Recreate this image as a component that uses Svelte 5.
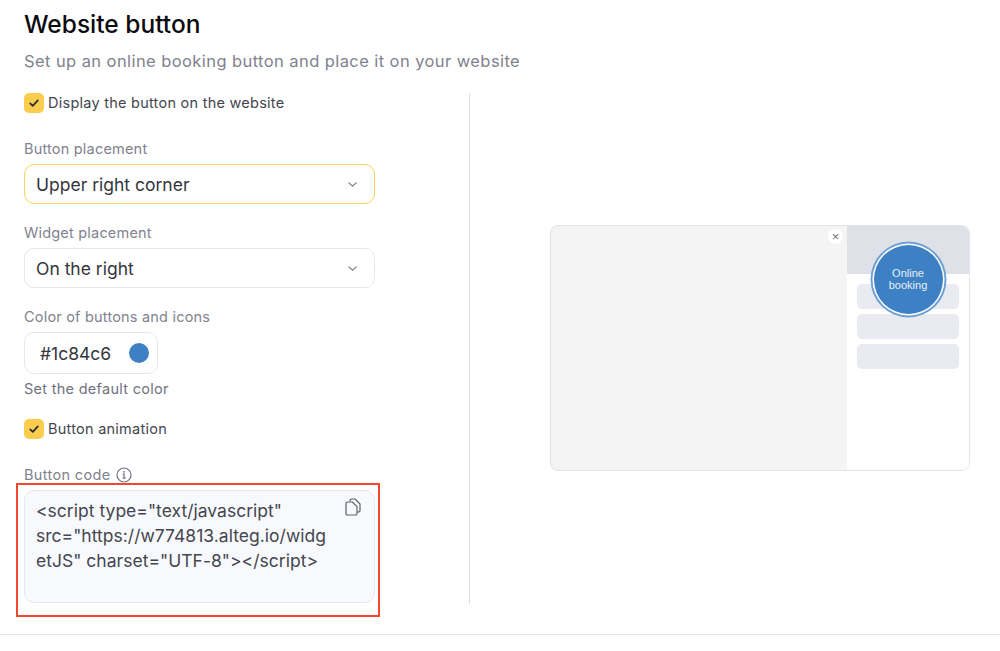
<script lang="ts">
  let showButton = $state(true);
  let animate = $state(true);
  const code = '<script type="text/javascript" src="https://w774813.alteg.io/widgetJS" charset="UTF-8"><\/script>';
</script>

{#snippet checkbox(label: string)}
  <div class="check">
    <span class="box">
      <svg width="12" height="12" viewBox="0 0 12 12" fill="none">
        <path d="M2.2 6.3 4.8 8.8 9.8 3.4" stroke="#2b2b33" stroke-width="1.7" stroke-linecap="round" stroke-linejoin="round" />
      </svg>
    </span>
    <span class="check-text">{label}</span>
  </div>
{/snippet}

{#snippet chevron()}
  <svg class="chev" width="9" height="5" viewBox="0 0 9 5" fill="none">
    <path d="M0.8 0.8 4.5 4.2 8.2 0.8" stroke="#6f7280" stroke-width="1.1" stroke-linecap="round" stroke-linejoin="round" />
  </svg>
{/snippet}

<main>
  <h1>Website button</h1>
  <p class="lead">Set up an online booking button and place it on your website</p>

  <div class="columns">
    <section class="form">
      {#if showButton}{@render checkbox('Display the button on the website')}{/if}

      <div class="label first">Button placement</div>
      <div class="select active">Upper right corner {@render chevron()}</div>

      <div class="label">Widget placement</div>
      <div class="select">On the right {@render chevron()}</div>

      <div class="label">Color of buttons and icons</div>
      <div class="color"><span class="hex">#1c84c6</span> <span class="dot"></span></div>
      <div class="hint">Set the default color</div>

      {#if animate}{@render checkbox('Button animation')}{/if}

      <div class="label code-label">
        Button code
        <svg width="16" height="16" viewBox="0 0 16 16" fill="none">
          <circle cx="8" cy="8" r="7" stroke="#6f7280" stroke-width="1.2" />
          <path d="M6.6 7.2H8.1V11M6.5 11.2H9.7" stroke="#6f7280" stroke-width="1.2" />
          <circle cx="8" cy="4.8" r="0.9" fill="#6f7280" />
        </svg>
      </div>
      <div class="code">
        {code}
        <svg class="copy" width="16" height="18" viewBox="0 0 16 18" fill="none">
          <path d="M5 3.6V2.6C5 1.7 5.7 1 6.6 1H10L15 6V12.4C15 13.3 14.3 14 13.4 14H12" stroke="#5d6069" stroke-width="1.2" stroke-linejoin="round" />
          <path d="M2.6 4H7.4L12 8.6V15.4C12 16.3 11.3 17 10.4 17H2.6C1.7 17 1 16.3 1 15.4V5.6C1 4.7 1.7 4 2.6 4Z" stroke="#5d6069" stroke-width="1.2" stroke-linejoin="round" />
        </svg>
      </div>
    </section>

    <section class="preview">
      <div class="frame">
        <div class="page">
          <span class="close">×</span>
        </div>
        <div class="widget">
          <div class="widget-head"></div>
          <div class="rows">
            <div class="row"></div>
            <div class="row"></div>
            <div class="row"></div>
          </div>
          <div class="bubble">Online<br />booking</div>
        </div>
      </div>
    </section>
  </div>
  <div class="rule"></div>
</main>

<style>
  :global(body) {
    background: #fff;
  }
  main {
    height: 651px;
    box-sizing: border-box;
    padding-top: 10px;
    overflow: hidden;
    font-family: Inter, 'Liberation Sans', sans-serif;
    color: #33353d;
  }
  h1 {
    margin: 0 0 0 24px;
    font-size: 24.5px;
    line-height: 29px;
    font-weight: 500;
    color: #0b0b10;
  }
  .lead {
    margin: 11px 0 0 24px;
    font-size: 16.5px;
    line-height: 22px;
    letter-spacing: 0.42px;
    color: #80828f;
  }
  .columns {
    display: flex;
    margin-top: 21px;
    height: 511px;
  }
  .form {
    width: 470px;
    flex: none;
    box-sizing: border-box;
    padding-left: 24px;
    border-right: 1px solid #dcdde3;
  }
  .check {
    display: flex;
    align-items: center;
    gap: 4px;
    height: 20px;
    font-size: 14.5px;
    letter-spacing: 0.25px;
    color: #44464f;
  }
  .check-text {
    margin-bottom: 2px;
  }
  .box {
    width: 20px;
    height: 20px;
    border-radius: 5px;
    background: #fbcd4e;
    display: flex;
    align-items: center;
    justify-content: center;
  }
  .label {
    margin-top: 20px;
    font-size: 14.5px;
    line-height: 18px;
    letter-spacing: 0.2px;
    color: #80828f;
  }
  .first {
    margin-top: 27px;
  }
  .select {
    margin-top: 6px;
    width: 351px;
    height: 40px;
    box-sizing: border-box;
    border: 1.5px solid #e6e7ee;
    border-radius: 10px;
    padding: 0 17px 0 11px;
    display: flex;
    align-items: center;
    justify-content: space-between;
    font-size: 17.5px;
    color: #33353d;
  }
  .select.active {
    border-color: #fcd35f;
  }
  .color {
    margin-top: 6px;
    width: 134px;
    height: 42px;
    box-sizing: border-box;
    border: 1.5px solid #e6e7ee;
    border-radius: 10px;
    padding: 0 8px 0 15px;
    display: flex;
    align-items: center;
    justify-content: space-between;
    font-size: 17.5px;
  }
  .hex {
    margin-top: 1px;
  }
  .dot {
    width: 20px;
    height: 20px;
    border-radius: 50%;
    background: #3d80c4;
  }
  .hint {
    margin-top: 6px;
    margin-bottom: 21px;
    font-size: 14.5px;
    line-height: 18px;
    letter-spacing: 0.28px;
    color: #6f7280;
  }
  .code-label {
    margin-top: 27px;
    display: flex;
    align-items: center;
    gap: 5px;
    letter-spacing: 0.35px;
  }
  .code {
    position: relative;
    margin-top: 6px;
    width: 351px;
    height: 113px;
    box-sizing: border-box;
    background: #f8f9fd;
    border: 1.5px solid #e6e7ee;
    border-radius: 10px;
    padding: 7px 42px 0 11px;
    font-size: 17.5px;
    letter-spacing: 0.02px;
    line-height: 25px;
    overflow-wrap: anywhere;
    color: #44464f;
  }
  /* red annotation box drawn over the screenshot */
  .code::after {
    content: '';
    position: absolute;
    inset: -8.5px -6px -14.5px -9.5px;
    border: 2.5px solid #f0492e;
    pointer-events: none;
  }
  .copy {
    position: absolute;
    right: 13px;
    top: 7px;
  }
  .preview {
    flex: 1;
    padding: 132px 0 0 79.5px;
  }
  .frame {
    width: 420.5px;
    height: 246px;
    box-sizing: border-box;
    border: 1.5px solid #e3e4ea;
    border-radius: 8px;
    background: #f4f4f5;
    display: flex;
    overflow: hidden;
  }
  .page {
    width: 296px;
    flex: none;
    position: relative;
  }
  .close {
    position: absolute;
    top: 3px;
    right: 3.5px;
    width: 15px;
    height: 15px;
    border-radius: 50%;
    background: #fff;
    color: #6f7280;
    font: 13px/15px 'Liberation Sans', sans-serif;
    text-align: center;
  }
  .widget {
    flex: 1;
    background: #fff;
    position: relative;
  }
  .widget-head {
    height: 48px;
    background: #dfe1e8;
  }
  .rows {
    padding: 10px 10px 0;
    display: flex;
    flex-direction: column;
    gap: 5px;
  }
  .row {
    height: 25px;
    border-radius: 5px;
    background: #e9ebf0;
  }
  .bubble {
    position: absolute;
    left: 27px;
    top: 19px;
    width: 69px;
    height: 69px;
    border-radius: 50%;
    background: #3d80c4;
    box-shadow: 0 0 0 1.5px #fff, 0 0 0 3.5px #6fa0d3;
    color: #e8f0f9;
    font: 11px/11.5px 'Liberation Sans', sans-serif;
    display: flex;
    align-items: center;
    justify-content: center;
    text-align: center;
  }
  .rule {
    height: 1px;
    background: #e3e4ea;
    margin-top: 30px;
  }
</style>
